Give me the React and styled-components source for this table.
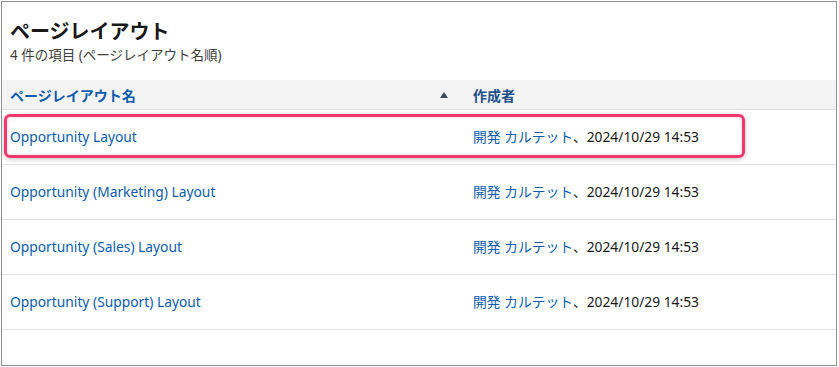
import React from 'react';
import styled, { createGlobalStyle } from 'styled-components';

const GlobalStyle = createGlobalStyle`
  body {
    margin: 0;
    background: #fff;
    font-family: "Noto Sans", "Noto Sans CJK JP", sans-serif;
  }
`;

const Frame = styled.div`
  margin: 1px 0 0 1px;
  width: 836px;
  height: 365px;
  box-sizing: border-box;
  border: 1px solid #8f8f8f;
  background: #fff;
  overflow: hidden;
`;

const Header = styled.div`
  padding: 17px 8px 0;
  height: 78px;
  box-sizing: border-box;
`;

const Title = styled.h1`
  margin: 0;
  font-size: 20px;
  font-weight: 700;
  line-height: 26px;
  color: #181818;
`;

const Subtitle = styled.div`
  margin-top: 1px;
  font-size: 13.5px;
  line-height: 18px;
  color: #3e3e3e;
`;

const Table = styled.div`
  display: flex;
  flex-direction: column;
`;

const HeadRow = styled.div`
  display: grid;
  grid-template-columns: 463px 1fr;
  height: 30px;
  align-items: center;
  background: #f3f3f3;
  border-bottom: 1px solid #e0e0e0;
  box-sizing: border-box;
`;

const HeadCell = styled.div`
  display: flex;
  align-items: center;
  justify-content: space-between;
  padding: 0 ${p => p.$padRight || 0}px 0 8px;
  font-size: 14px;
  font-weight: 700;
  color: ${p => (p.$sorted ? '#0b5cab' : '#22518a')};
`;

const SortArrow = styled.span`
  width: 0;
  height: 0;
  border-left: 4px solid transparent;
  border-right: 4px solid transparent;
  border-bottom: 6px solid #3a4a5f;
`;

const Row = styled.div`
  position: relative;
  display: grid;
  grid-template-columns: 463px 1fr;
  align-items: center;
  height: 55px;
  border-bottom: 1px solid #e2e2e2;
  box-sizing: border-box;
  font-size: 13.8px;

  ${p =>
    p.$highlight &&
    `
    &::after {
      content: '';
      position: absolute;
      left: 2px;
      top: 4px;
      width: 741px;
      height: 44px;
      box-sizing: border-box;
      border: 3px solid #f4386e;
      border-radius: 6px;
      box-shadow: 0 1px 5px rgba(0, 0, 0, 0.25), inset 0 0 4px rgba(0, 0, 0, 0.15);
      pointer-events: none;
    }
  `}
`;

const Cell = styled.div`
  padding-left: 8px;
  color: #181818;
  white-space: nowrap;
  transform: translateY(-1px);
`;

const Link = styled.a`
  color: #0b5cab;
  text-decoration: none;
`;

const rows = [
  'Opportunity Layout',
  'Opportunity (Marketing) Layout',
  'Opportunity (Sales) Layout',
  'Opportunity (Support) Layout',
];

export default function App() {
  return (
    <>
      <GlobalStyle />
      <Frame>
        <Header>
          <Title>ページレイアウト</Title>
          <Subtitle>4 件の項目 (ページレイアウト名順)</Subtitle>
        </Header>
        <Table>
          <HeadRow>
            <HeadCell $sorted $padRight={17}>
              ページレイアウト名
              <SortArrow />
            </HeadCell>
            <HeadCell>作成者</HeadCell>
          </HeadRow>
          {rows.map((name, i) => (
            <Row key={name} $highlight={i === 0}>
              <Cell>
                <Link href="#">{name}</Link>
              </Cell>
              <Cell>
                <Link href="#">開発 カルテット</Link>、2024/10/29 14:53
              </Cell>
            </Row>
          ))}
        </Table>
      </Frame>
    </>
  );
}
